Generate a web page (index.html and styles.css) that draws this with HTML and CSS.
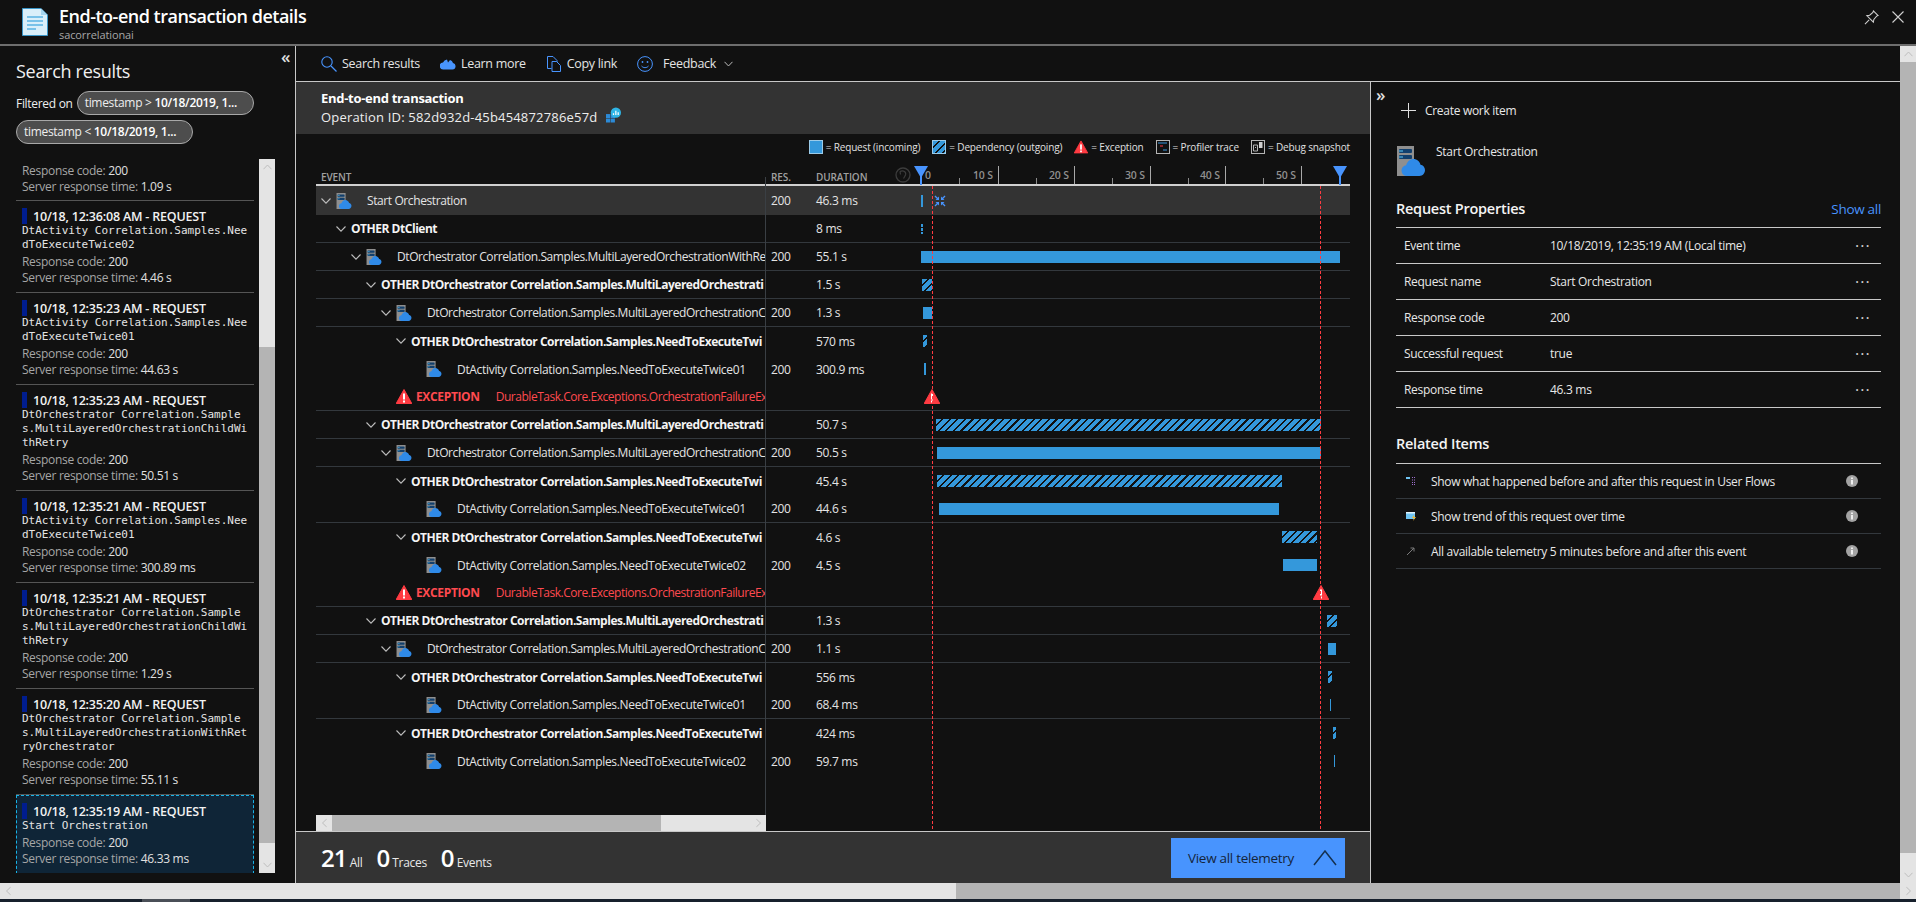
FILE: index.html
```html
<!DOCTYPE html>
<html lang="en">
<head>
<meta charset="utf-8">
<title>End-to-end transaction details</title>
<link rel="stylesheet" href="styles.css">
</head>
<body>
<svg class="defs" width="0" height="0" aria-hidden="true">
  <symbol id="srv" viewBox="0 0 28 30">
    <rect x="0" y="0" width="17" height="30" fill="#8f8f8f"/>
    <rect x="2" y="3" width="13" height="4" rx="1" fill="#12406e"/>
    <rect x="2" y="9" width="13" height="4" rx="1" fill="#12406e"/>
    <rect x="2" y="4.500" width="4" height="1" fill="#5cc8f5"/>
    <rect x="2" y="10.500" width="4" height="1" fill="#5cc8f5"/>
    <path d="M10 30a5.500 5.500 0 0 1-5.500-5.500c0-2.800 2-5 4.700-5.300C10.300 15.500 13 13 16.500 13c3.500 0 6.300 2.500 7 5.800 2.600.4 4.500 2.600 4.500 5.300 0 3.200-2.400 5.900-5.500 5.900z" fill="#2f8ae8"/>
  </symbol>
  <symbol id="warn" viewBox="0 0 16 15">
    <path d="M8 .5 15.800 14.500H.2z" fill="#ff3b42" stroke="#ff3b42" stroke-linejoin="round"/>
    <rect x="7" y="4.500" width="2" height="6" fill="#fff"/>
    <rect x="7" y="11.500" width="2" height="2" fill="#fff"/>
  </symbol>
  <symbol id="chev" viewBox="0 0 10 6">
    <path d="M.5.500 5 5.200 9.500.500" fill="none" stroke="#bdbdbd" stroke-width="1.100"/>
  </symbol>
  <symbol id="info" viewBox="0 0 12 12">
    <circle cx="6" cy="6" r="6" fill="#a3a3a3"/>
    <rect x="5.200" y="5" width="1.600" height="4.500" fill="#fff"/>
    <rect x="5.200" y="2.500" width="1.600" height="1.600" fill="#fff"/>
  </symbol>
</svg>

<div class="page">
  <header class="blade-head">
    <svg class="doc-icon" viewBox="0 0 26 28">
      <path d="M.5.500H19L25.500 7V27.500H.5z" fill="#d9effa" stroke="#3a96c8"/>
      <path d="M19 .5V7h6.500z" fill="#a5d5ee"/>
      <path d="M5 9h16M5 13h16M5 17h16M5 21h9" stroke="#59b4e3" stroke-width="1.600"/>
    </svg>
    <div class="blade-titles">
      <h1 class="blade-title">End-to-end transaction details</h1>
      <div class="blade-sub">sacorrelationai</div>
    </div>
    <div class="blade-actions">
      <svg class="pin" viewBox="0 0 16 16"><path d="M10 1l5 5-1.500.5L10.500 10l-.5 3-7-7 3-.5 3.500-3z M5.500 10.500 1 15" fill="none" stroke="#d0d0d0" stroke-width="1.100"/></svg>
      <svg class="close" viewBox="0 0 12 12"><path d="M.5.500l11 11M11.500.500l-11 11" stroke="#d0d0d0" stroke-width="1.100"/></svg>
    </div>
  </header>

  <div class="blade-body">
    <aside class="left">
      <span class="collapse">«</span>
      <h2 class="left-title">Search results</h2>
      <div class="filters">
        <span class="filter-label">Filtered on</span>
        <span class="pill">timestamp &gt; <b>10/18/2019, 1...</b></span>
        <span class="pill">timestamp &lt; <b>10/18/2019, 1...</b></span>
      </div>
      <div class="results">
        <div class="result-list">
          <div class="item partial">
            <div class="meta"><span>Response code:</span> 200</div>
            <div class="meta"><span>Server response time:</span> 1.09 s</div>
          </div>
          <div class="item">
            <div class="item-title"><i class="mark"></i>10/18, 12:36:08 AM - REQUEST</div>
            <div class="mono">DtActivity Correlation.Samples.NeedToExecuteTwice02</div>
            <div class="meta"><span>Response code:</span> 200</div>
            <div class="meta"><span>Server response time:</span> 4.46 s</div>
          </div>
          <div class="item">
            <div class="item-title"><i class="mark"></i>10/18, 12:35:23 AM - REQUEST</div>
            <div class="mono">DtActivity Correlation.Samples.NeedToExecuteTwice01</div>
            <div class="meta"><span>Response code:</span> 200</div>
            <div class="meta"><span>Server response time:</span> 44.63 s</div>
          </div>
          <div class="item">
            <div class="item-title"><i class="mark"></i>10/18, 12:35:23 AM - REQUEST</div>
            <div class="mono">DtOrchestrator Correlation.Sample<br>s.MultiLayeredOrchestrationChildWithRetry</div>
            <div class="meta"><span>Response code:</span> 200</div>
            <div class="meta"><span>Server response time:</span> 50.51 s</div>
          </div>
          <div class="item">
            <div class="item-title"><i class="mark"></i>10/18, 12:35:21 AM - REQUEST</div>
            <div class="mono">DtActivity Correlation.Samples.NeedToExecuteTwice01</div>
            <div class="meta"><span>Response code:</span> 200</div>
            <div class="meta"><span>Server response time:</span> 300.89 ms</div>
          </div>
          <div class="item">
            <div class="item-title"><i class="mark"></i>10/18, 12:35:21 AM - REQUEST</div>
            <div class="mono">DtOrchestrator Correlation.Sample<br>s.MultiLayeredOrchestrationChildWithRetry</div>
            <div class="meta"><span>Response code:</span> 200</div>
            <div class="meta"><span>Server response time:</span> 1.29 s</div>
          </div>
          <div class="item">
            <div class="item-title"><i class="mark"></i>10/18, 12:35:20 AM - REQUEST</div>
            <div class="mono">DtOrchestrator Correlation.Sample<br>s.MultiLayeredOrchestrationWithRetryOrchestrator</div>
            <div class="meta"><span>Response code:</span> 200</div>
            <div class="meta"><span>Server response time:</span> 55.11 s</div>
          </div>
          <div class="item selected">
            <div class="item-title"><i class="mark"></i>10/18, 12:35:19 AM - REQUEST</div>
            <div class="mono">Start Orchestration</div>
            <div class="meta"><span>Response code:</span> 200</div>
            <div class="meta"><span>Server response time:</span> 46.33 ms</div>
          </div>
        </div>
        <div class="vbar list-bar">
          <div class="arrow"><svg class="a-up" viewBox="0 0 10 6"><use href="#chev"/></svg></div>
          <div class="track-top"></div>
          <div class="thumb"></div>
          <div class="arrow"><svg class="a" viewBox="0 0 10 6"><use href="#chev"/></svg></div>
        </div>
      </div>
    </aside>

    <div class="center">
      <nav class="toolbar">
        <span class="tool"><svg class="ti" viewBox="0 0 16 16"><circle cx="6" cy="6" r="5.200" fill="none" stroke="#4894fe" stroke-width="1.100"/><path d="M10 10l5.500 5.500" stroke="#4894fe" stroke-width="1.200"/></svg>Search results</span>
        <span class="tool"><svg class="ti" viewBox="0 0 16 11"><path d="M3.500 11A3.500 3.500 0 0 1 3 4a4.800 4.800 0 0 1 4-3l1 3 2-2.500A4.500 4.500 0 0 1 13 4.500 3.300 3.300 0 0 1 12.500 11z" fill="#4894fe"/></svg>Learn more</span>
        <span class="tool"><svg class="ti copy" viewBox="0 0 14 16"><path d="M4.500 12.500H.5V.5H6l4 4V6M5 5.500h4.500l4 4v6H5z" fill="none" stroke="#4894fe"/></svg>Copy link</span>
        <span class="tool"><svg class="ti smile" viewBox="0 0 16 16"><circle cx="8" cy="8" r="7.400" fill="none" stroke="#4894fe"/><circle cx="5.500" cy="6" r=".9" fill="#4894fe"/><circle cx="10.500" cy="6" r=".9" fill="#4894fe"/><path d="M4.500 10c2 2.200 5 2.200 7 0" fill="none" stroke="#4894fe"/></svg>Feedback<svg class="tchev" viewBox="0 0 10 6"><use href="#chev"/></svg></span>
      </nav>

      <div class="work">
        <main class="main">
          <div class="band">
            <div class="band-title">End-to-end transaction</div>
            <div class="band-op">Operation ID: 582d932d-45b454872786e57d
              <svg class="ai" viewBox="0 0 16 16"><rect x="0" y="7" width="4.500" height="4.500" fill="#2c8ad6"/><rect x="5" y="7" width="4.500" height="4.500" fill="#2c8ad6"/><rect x="0" y="12" width="4.500" height="4" fill="#2c8ad6"/><rect x="5" y="12" width="4.500" height="4" fill="#2c8ad6"/><circle cx="10.500" cy="5.500" r="5.500" fill="#2fb5e6"/><path d="M8 8V6M10.500 8V3.500M13 8V5" stroke="#fff" stroke-width="1.300"/></svg>
            </div>
          </div>

          <div class="legend">
            <span class="lg"><i class="sq"></i>= Request (incoming)</span>
            <span class="lg"><i class="sq hatched"></i>= Dependency (outgoing)</span>
            <span class="lg"><svg class="lg-warn" viewBox="0 0 16 15"><use href="#warn"/></svg>= Exception</span>
            <span class="lg"><svg class="lg-box" viewBox="0 0 14 14"><rect x=".5" y=".5" width="13" height="13" fill="none" stroke="#b5b5b5"/><path d="M2 3h9" stroke="#3a96dd"/><path d="M4 6h3" stroke="#ff3b42"/><path d="M7 10h4" stroke="#3a96dd"/></svg>= Profiler trace</span>
            <span class="lg"><svg class="lg-box" viewBox="0 0 14 14"><rect x=".5" y=".5" width="13" height="13" fill="none" stroke="#b5b5b5"/><path d="M2.500 5h4v6h-4zM4 7.500h1" fill="none" stroke="#b5b5b5"/><rect x="8" y="2" width="3.500" height="6" fill="#d0d0d0"/></svg>= Debug snapshot</span>
          </div>

          <div class="table">
            <div class="thead">
              <div class="th">EVENT</div>
              <div class="th">RES.</div>
              <div class="th th-dur">DURATION</div>
              <div class="ruler">
                <span class="rl rl-zero">0</span>
                <i class="tk" style="left:38px"></i>
                <i class="tk big" style="left:77px"></i><span class="rl" style="left:77px">10 S</span>
                <i class="tk" style="left:115px"></i>
                <i class="tk big" style="left:153px"></i><span class="rl" style="left:153px">20 S</span>
                <i class="tk" style="left:191px"></i>
                <i class="tk big" style="left:229px"></i><span class="rl" style="left:229px">30 S</span>
                <i class="tk" style="left:267px"></i>
                <i class="tk big" style="left:304px"></i><span class="rl" style="left:304px">40 S</span>
                <i class="tk" style="left:342px"></i>
                <i class="tk big" style="left:380px"></i><span class="rl" style="left:380px">50 S</span>
                <svg class="marker" style="left:-7px" viewBox="0 0 14 19"><path d="M0 0h14L7 12z" fill="#4894fe"/><rect x="6" y="10" width="2" height="9" fill="#4894fe"/></svg>
                <svg class="marker" style="left:412px" viewBox="0 0 14 19"><path d="M0 0h14L7 12z" fill="#4894fe"/><rect x="6" y="10" width="2" height="9" fill="#4894fe"/></svg>
                <svg class="undo" viewBox="0 0 16 16"><circle cx="8" cy="8" r="7" fill="none" stroke="#3c3c3c" stroke-width="1.300"/><path d="M5 4.500c3.500-1.500 6.500.5 5.500 3.500L8.500 11.500M5 4.500l.5 3" fill="none" stroke="#3c3c3c" stroke-width="1.200"/></svg>
              </div>
            </div>

            <div class="rows">
              <div class="row first sel">
                <div class="name l0"><svg class="ch" viewBox="0 0 10 6"><use href="#chev"/></svg><svg class="srv"><use href="#srv"/></svg><span>Start Orchestration</span></div>
                <div class="res">200</div><div class="dur">46.3 ms</div>
                <div class="track"><i class="tick"></i><svg class="shrink" viewBox="0 0 12 12"><g fill="#4894fe"><path id="sh" d="M5 5H1.500L2.800 3.700.5 1.400 1.400.5 3.700 2.800 5 1.500z"/><path d="M7 5h3.500L9.200 3.700 11.500 1.400 10.600.5 8.300 2.800 7 1.500z"/><path d="M5 7H1.500L2.800 8.300.5 10.600 1.400 11.500 3.700 9.200 5 10.500z"/><path d="M7 7h3.500L9.200 8.300 11.500 10.600 10.600 11.500 8.300 9.200 7 10.500z"/></g></svg></div>
              </div>
              <div class="row sep">
                <div class="name l1 strong"><svg class="ch" viewBox="0 0 10 6"><use href="#chev"/></svg><span>OTHER DtClient</span></div>
                <div class="res"></div><div class="dur">8 ms</div>
                <div class="track"><i class="tick dashed"></i></div>
              </div>
              <div class="row sep">
                <div class="name l2"><svg class="ch" viewBox="0 0 10 6"><use href="#chev"/></svg><svg class="srv"><use href="#srv"/></svg><span>DtOrchestrator Correlation.Samples.MultiLayeredOrchestrationWithRe</span></div>
                <div class="res">200</div><div class="dur">55.1 s</div>
                <div class="track"><i class="bar" style="margin-left:0;width:419px"></i></div>
              </div>
              <div class="row sep">
                <div class="name l3 strong"><svg class="ch" viewBox="0 0 10 6"><use href="#chev"/></svg><span>OTHER DtOrchestrator Correlation.Samples.MultiLayeredOrchestrati</span></div>
                <div class="res"></div><div class="dur">1.5 s</div>
                <div class="track"><i class="bar hatched" style="margin-left:1px;width:10px"></i></div>
              </div>
              <div class="row sep">
                <div class="name l4"><svg class="ch" viewBox="0 0 10 6"><use href="#chev"/></svg><svg class="srv"><use href="#srv"/></svg><span>DtOrchestrator Correlation.Samples.MultiLayeredOrchestrationC</span></div>
                <div class="res">200</div><div class="dur">1.3 s</div>
                <div class="track"><i class="bar" style="margin-left:2px;width:9px"></i></div>
              </div>
              <div class="row">
                <div class="name l5 strong"><svg class="ch" viewBox="0 0 10 6"><use href="#chev"/></svg><span>OTHER DtOrchestrator Correlation.Samples.NeedToExecuteTwi</span></div>
                <div class="res"></div><div class="dur">570 ms</div>
                <div class="track"><i class="bar hatched" style="margin-left:2px;width:4px"></i></div>
              </div>
              <div class="row">
                <div class="name l6"><svg class="srv"><use href="#srv"/></svg><span>DtActivity Correlation.Samples.NeedToExecuteTwice01</span></div>
                <div class="res">200</div><div class="dur">300.9 ms</div>
                <div class="track"><i class="bar" style="margin-left:3px;width:2px"></i></div>
              </div>
              <div class="row sep">
                <div class="name l5 exc"><svg class="w"><use href="#warn"/></svg><b>EXCEPTION</b><span>DurableTask.Core.Exceptions.OrchestrationFailureEx</span></div>
                <div class="res"></div><div class="dur"></div>
                <div class="track"><svg class="w" style="margin-left:3px"><use href="#warn"/></svg></div>
              </div>
              <div class="row sep">
                <div class="name l3 strong"><svg class="ch" viewBox="0 0 10 6"><use href="#chev"/></svg><span>OTHER DtOrchestrator Correlation.Samples.MultiLayeredOrchestrati</span></div>
                <div class="res"></div><div class="dur">50.7 s</div>
                <div class="track"><i class="bar hatched" style="margin-left:15px;width:385px"></i></div>
              </div>
              <div class="row sep">
                <div class="name l4"><svg class="ch" viewBox="0 0 10 6"><use href="#chev"/></svg><svg class="srv"><use href="#srv"/></svg><span>DtOrchestrator Correlation.Samples.MultiLayeredOrchestrationC</span></div>
                <div class="res">200</div><div class="dur">50.5 s</div>
                <div class="track"><i class="bar" style="margin-left:16px;width:384px"></i></div>
              </div>
              <div class="row">
                <div class="name l5 strong"><svg class="ch" viewBox="0 0 10 6"><use href="#chev"/></svg><span>OTHER DtOrchestrator Correlation.Samples.NeedToExecuteTwi</span></div>
                <div class="res"></div><div class="dur">45.4 s</div>
                <div class="track"><i class="bar hatched" style="margin-left:16px;width:345px"></i></div>
              </div>
              <div class="row sep">
                <div class="name l6"><svg class="srv"><use href="#srv"/></svg><span>DtActivity Correlation.Samples.NeedToExecuteTwice01</span></div>
                <div class="res">200</div><div class="dur">44.6 s</div>
                <div class="track"><i class="bar" style="margin-left:18px;width:340px"></i></div>
              </div>
              <div class="row">
                <div class="name l5 strong"><svg class="ch" viewBox="0 0 10 6"><use href="#chev"/></svg><span>OTHER DtOrchestrator Correlation.Samples.NeedToExecuteTwi</span></div>
                <div class="res"></div><div class="dur">4.6 s</div>
                <div class="track"><i class="bar hatched" style="margin-left:361px;width:35px"></i></div>
              </div>
              <div class="row">
                <div class="name l6"><svg class="srv"><use href="#srv"/></svg><span>DtActivity Correlation.Samples.NeedToExecuteTwice02</span></div>
                <div class="res">200</div><div class="dur">4.5 s</div>
                <div class="track"><i class="bar" style="margin-left:362px;width:34px"></i></div>
              </div>
              <div class="row sep">
                <div class="name l5 exc"><svg class="w"><use href="#warn"/></svg><b>EXCEPTION</b><span>DurableTask.Core.Exceptions.OrchestrationFailureEx</span></div>
                <div class="res"></div><div class="dur"></div>
                <div class="track"><svg class="w" style="margin-left:392px"><use href="#warn"/></svg></div>
              </div>
              <div class="row sep">
                <div class="name l3 strong"><svg class="ch" viewBox="0 0 10 6"><use href="#chev"/></svg><span>OTHER DtOrchestrator Correlation.Samples.MultiLayeredOrchestrati</span></div>
                <div class="res"></div><div class="dur">1.3 s</div>
                <div class="track"><i class="bar hatched" style="margin-left:406px;width:10px"></i></div>
              </div>
              <div class="row sep">
                <div class="name l4"><svg class="ch" viewBox="0 0 10 6"><use href="#chev"/></svg><svg class="srv"><use href="#srv"/></svg><span>DtOrchestrator Correlation.Samples.MultiLayeredOrchestrationC</span></div>
                <div class="res">200</div><div class="dur">1.1 s</div>
                <div class="track"><i class="bar" style="margin-left:407px;width:8px"></i></div>
              </div>
              <div class="row">
                <div class="name l5 strong"><svg class="ch" viewBox="0 0 10 6"><use href="#chev"/></svg><span>OTHER DtOrchestrator Correlation.Samples.NeedToExecuteTwi</span></div>
                <div class="res"></div><div class="dur">556 ms</div>
                <div class="track"><i class="bar hatched" style="margin-left:407px;width:4px"></i></div>
              </div>
              <div class="row sep">
                <div class="name l6"><svg class="srv"><use href="#srv"/></svg><span>DtActivity Correlation.Samples.NeedToExecuteTwice01</span></div>
                <div class="res">200</div><div class="dur">68.4 ms</div>
                <div class="track"><i class="bar" style="margin-left:409px;width:1px"></i></div>
              </div>
              <div class="row">
                <div class="name l5 strong"><svg class="ch" viewBox="0 0 10 6"><use href="#chev"/></svg><span>OTHER DtOrchestrator Correlation.Samples.NeedToExecuteTwi</span></div>
                <div class="res"></div><div class="dur">424 ms</div>
                <div class="track"><i class="bar hatched" style="margin-left:412px;width:3px"></i></div>
              </div>
              <div class="row">
                <div class="name l6"><svg class="srv"><use href="#srv"/></svg><span>DtActivity Correlation.Samples.NeedToExecuteTwice02</span></div>
                <div class="res">200</div><div class="dur">59.7 ms</div>
                <div class="track"><i class="bar" style="margin-left:413px;width:1px"></i></div>
              </div>
            </div>

            <div class="tbl-scroll">
              <div class="hscroll-row">
                <div class="arrow-h"><svg class="a-left" viewBox="0 0 10 6"><use href="#chev"/></svg></div>
                <div class="h-thumb"></div>
                <div class="h-rest"><svg class="a-right" viewBox="0 0 10 6"><use href="#chev"/></svg></div>
              </div>
            </div>
            <i class="col-line"></i>
            <i class="red-line r1"></i>
            <i class="red-line r2"></i>
          </div>

          <footer class="footer">
            <div class="counts">
              <span class="count"><b>21</b>All</span>
              <span class="count"><b>0</b>Traces</span>
              <span class="count"><b>0</b>Events</span>
            </div>
            <button class="view-all">View all telemetry<svg viewBox="0 0 24 16"><path d="M1 15 12 1l11 14" fill="none" stroke="#14304f" stroke-width="1.500"/></svg></button>
          </footer>
        </main>

        <section class="right">
          <span class="expand">»</span>
          <div class="create"><svg viewBox="0 0 15 15"><path d="M7.500 0v15M0 7.500h15" stroke="#e0e0e0"/></svg>Create work item</div>
          <div class="entity"><svg class="big-srv"><use href="#srv"/></svg><span>Start Orchestration</span></div>
          <div class="sec-head"><h3>Request Properties</h3><a class="show-all">Show all</a></div>
          <div class="prop"><span class="k">Event time</span><span class="v">10/18/2019, 12:35:19 AM (Local time)</span><span class="dots">···</span></div>
          <div class="prop"><span class="k">Request name</span><span class="v">Start Orchestration</span><span class="dots">···</span></div>
          <div class="prop"><span class="k">Response code</span><span class="v">200</span><span class="dots">···</span></div>
          <div class="prop"><span class="k">Successful request</span><span class="v">true</span><span class="dots">···</span></div>
          <div class="prop"><span class="k">Response time</span><span class="v">46.3 ms</span><span class="dots">···</span></div>
          <div class="sec-head related"><h3>Related Items</h3></div>
          <div class="rel">
            <svg class="rel-ic" viewBox="0 0 10 10"><rect x="0" y="1" width="4" height="2" fill="#6fc4f2"/><path d="M6 1h1v1H6zM8 1h1v1H8zM6 3.500h1v1H6zM8 3.500h1v1H8zM6 6h1v1H6zM8 6h1v1H8zM6 8h1v1H6zM8 8h1v1H8z" fill="#a070d0"/></svg>
            <span>Show what happened before and after this request in User Flows</span>
            <svg class="info"><use href="#info"/></svg>
          </div>
          <div class="rel">
            <svg class="rel-ic" viewBox="0 0 10 10"><rect x="0" y="1" width="9" height="7" fill="#6fc4f2"/><rect x="0" y="1" width="9" height="1.500" fill="#dff2fc"/><path d="M8 4 6 7h2l-1 3 3-4H8z" fill="#f5b82e"/></svg>
            <span>Show trend of this request over time</span>
            <svg class="info"><use href="#info"/></svg>
          </div>
          <div class="rel">
            <svg class="rel-ic" viewBox="0 0 10 10"><path d="M1 9 8 2M4.500 2H8V5.500" fill="none" stroke="#7a7a7a"/></svg>
            <span>All available telemetry 5 minutes before and after this event</span>
            <svg class="info"><use href="#info"/></svg>
          </div>
        </section>
      </div>
    </div>

    <div class="vbar page-bar">
      <div class="arrow"><svg class="a-up" viewBox="0 0 10 6"><use href="#chev"/></svg></div>
      <div class="page-thumb"></div>
      <div class="page-rest"><svg class="a" viewBox="0 0 10 6"><use href="#chev"/></svg></div>
    </div>
  </div>

  <div class="page-hbar">
    <div class="arrow-h"><svg class="a-left" viewBox="0 0 10 6"><use href="#chev"/></svg></div>
    <div class="page-h-track"></div>
    <div class="page-h-thumb"></div>
    <div class="arrow-h"><svg class="a-right" viewBox="0 0 10 6"><use href="#chev"/></svg></div>
  </div>
  <div class="taskbar"><i class="task-item"></i></div>
</div>
</body>
</html>
```

FILE: styles.css
```css
* { box-sizing: border-box; }
html, body { margin: 0; height: 100%; overflow: hidden; }
body {
  background: #111;
  color: #e8e8e8;
  font-family: "Open Sans", "Noto Sans", sans-serif;
  font-size: 12px;
  letter-spacing: -0.3px;
}
.defs { position: absolute; }
b { font-weight: 700; }
i { display: block; font-style: normal; }
h1, h2, h3 { margin: 0; }

.page { display: flex; flex-direction: column; width: 1916px; height: 902px; }

/* header */
.blade-head {
  flex: 0 0 46px;
  display: flex;
  align-items: flex-start;
  border-bottom: 2px solid #6e6e6e;
  padding: 8px 0 0 22px;
}
.doc-icon { width: 26px; height: 28px; flex: none; }
.blade-titles { margin-left: 11px; margin-top: -3px; }
.blade-title { font-size: 18px; font-weight: 600; line-height: 23px; color: #fff; letter-spacing: -0.5px; }
.blade-sub { font-size: 11px; line-height: 14px; color: #a8a8a8; letter-spacing: -0.1px; }
.blade-actions { margin-left: auto; display: flex; align-items: center; gap: 13px; padding-right: 12px; height: 14px; margin-top: 2px; }
.pin { width: 15px; height: 15px; }
.close { width: 12px; height: 12px; }

.blade-body { flex: 1; display: flex; min-height: 0; }

/* left */
.left {
  flex: 0 0 296px;
  border-right: 1px solid #c8c8c8;
  position: relative;
  display: flex;
  flex-direction: column;
  padding: 13px 0 10px 16px;
}
.collapse { position: absolute; left: 281px; top: 1px; font-size: 17px; line-height: 20px; font-weight: 600; color: #e0e0e0; }
.left-title { font-size: 18px; font-weight: 400; line-height: 24px; color: #f0f0f0; letter-spacing: -0.3px; }
.filters { display: flex; flex-wrap: wrap; align-items: center; column-gap: 4px; row-gap: 5px; margin-top: 8px; }
.filter-label { color: #eee; font-size: 12px; }
.pill {
  width: 177px;
  height: 24px;
  border: 1px solid #a8a8a8;
  border-radius: 12px;
  background: #4d4d4d;
  padding: 0 7px;
  line-height: 22px;
  white-space: nowrap;
  overflow: hidden;
  color: #eee;
}
.pill b { color: #fff; font-weight: 600; }
.results { flex: 1; min-height: 0; display: flex; margin-top: 15px; }
.result-list { width: 238px; overflow: hidden; }
.item { border-bottom: 1px solid #555; padding: 7px 0 6px 6px; }
.partial { padding-top: 4px; padding-bottom: 5px; }
.item-title { display: flex; align-items: center; height: 16px; font-size: 12.500px; font-weight: 600; color: #f2f2f2; letter-spacing: -0.2px; white-space: nowrap; }
.mark { width: 5px; height: 16px; background: #001d8e; margin-right: 6px; }
.mono {
  font-family: "DejaVu Sans Mono", "Liberation Mono", monospace;
  font-size: 11px;
  line-height: 14px;
  letter-spacing: 0;
  color: #e4e4e4;
  word-break: break-all;
  margin-bottom: 2px;
  padding-right: 6px;
}
.meta { line-height: 16px; color: #e0e0e0; white-space: nowrap; }
.meta span { color: #a6a6a6; }
.item.selected {
  background: #0f2537;
  outline: 1px dashed #19b4e6;
  outline-offset: -1px;
  border-bottom: 0;
  padding-top: 8px;
  padding-bottom: 7px;
}

.vbar { background: #e4e4e4; display: flex; flex-direction: column; }
.list-bar { flex: 0 0 16px; margin-left: 5px; }
.arrow { flex: 0 0 16px; display: flex; align-items: center; justify-content: center; }
.a, .a-up { width: 9px; height: 6px; }
.a-up { transform: rotate(180deg); }
.track-top { flex: 0 0 172px; margin-top: 0; }
.thumb { flex: 1; background: #b4b4b4; margin-bottom: 14px; }

/* center */
.center { flex: 1; display: flex; flex-direction: column; min-width: 0; }
.toolbar {
  flex: 0 0 36px;
  display: flex;
  align-items: center;
  gap: 20px;
  padding-left: 25px;
  border-bottom: 1px solid #c8c8c8;
  font-size: 12.500px;
  color: #e4e4e4;
}
.tool { display: flex; align-items: center; white-space: nowrap; }
.ti { width: 16px; height: 16px; margin-right: 5px; }
.copy { width: 14px; margin-left: 1px; margin-right: 6px; }
.smile { margin-right: 10px; }
.tchev { width: 9px; height: 6px; margin-left: 8px; }
.work { flex: 1; display: flex; min-height: 0; }

/* main */
.main { flex: 0 0 1075px; border-right: 1px solid #c8c8c8; display: flex; flex-direction: column; }
.band { flex: 0 0 52px; background: #333; padding: 7px 0 0 25px; }
.band-title { font-size: 13px; font-weight: 700; line-height: 18px; color: #fff; }
.band-op { display: flex; align-items: center; gap: 9px; font-size: 13px; line-height: 20px; color: #eee; letter-spacing: 0.18px; }
.ai { width: 15px; height: 16px; margin-top: -4px; }

.legend {
  flex: 0 0 26px;
  display: flex;
  justify-content: flex-end;
  align-items: center;
  gap: 12px;
  padding-right: 20px;
  font-size: 10px;
  letter-spacing: -0.15px;
  color: #e0e0e0;
}
.lg { display: flex; align-items: center; gap: 3px; white-space: nowrap; }
.sq { width: 14px; height: 14px; background: #3498db; border: 1px solid #9ccbe8; }
.hatched { background: repeating-linear-gradient(135deg, #3498db 0 3.800px, #111 3.800px 5.400px); }
.sq.hatched { border-color: #9ccbe8; }
.lg-warn { width: 14px; height: 14px; }
.lg-box { width: 14px; height: 14px; }

.table { flex: 1; min-height: 0; position: relative; margin: 0 20px 0 20px; display: flex; flex-direction: column; }
.thead {
  flex: 0 0 26px;
  display: grid;
  grid-template-columns: 449px 51px 105px 429px;
  border-bottom: 2px solid #d0d0d0;
  font-size: 10px;
  font-weight: 600;
  color: #a0a0a0;
  letter-spacing: -0.1px;
}
.th { padding: 10px 0 0 5px; line-height: 14px; }
.th:nth-child(2) { padding-left: 6px; }
.th-dur { padding-left: 0; }
.ruler { position: relative; }
.tk { position: absolute; bottom: 0; width: 1px; height: 6px; background: #8a8a8a; }
.tk.big { height: 18px; background: #a8a8a8; }
.rl { position: absolute; top: 9px; left: 0; transform: translateX(-100%); padding-right: 5px; line-height: 13px; font-size: 10.500px; font-weight: 600; color: #8f8f8f; white-space: nowrap; }
.rl-zero { left: 4px; transform: none; padding: 0; }
.marker { position: absolute; width: 14px; height: 19px; top: 6px; }
.undo { position: absolute; left: -26px; top: 7px; width: 16px; height: 16px; }

.rows { flex: 1; min-height: 0; }
.row {
  display: grid;
  grid-template-columns: 449px 51px 105px 429px;
  height: 28px;
  align-items: center;
  color: #e4e4e4;
}
.row.sep { border-bottom: 1px solid #33383d; }
.row.first { height: 29px; }
.row.sel { background: #333; }
.name { display: flex; align-items: center; overflow: hidden; white-space: nowrap; height: 100%; letter-spacing: -0.4px; }
.l0 { padding-left: 5px; }
.l1 { padding-left: 20px; }
.l2 { padding-left: 35px; }
.l3 { padding-left: 50px; }
.l4 { padding-left: 65px; }
.l5 { padding-left: 80px; }
.l6 { padding-left: 110px; }
.l6 span { letter-spacing: -0.32px; }
.ch { flex: none; width: 10px; height: 6px; margin-right: 5px; }
.srv { flex: none; width: 16px; height: 16px; margin-right: 15px; }
.strong { font-weight: 700; color: #f4f4f4; letter-spacing: -0.47px; }
.exc { color: #ff4a4f; letter-spacing: -0.47px; }
.exc b { font-weight: 700; margin-right: 16px; letter-spacing: -0.35px; }
.w { flex: none; width: 16px; height: 15px; margin-right: 4px; }
.res { padding-left: 6px; }
.track { display: flex; align-items: center; height: 100%; }
.bar { height: 12px; background: #3498db; flex: none; }
.bar.hatched { background: repeating-linear-gradient(135deg, #3498db 0 3.800px, #111 3.800px 5.400px); }
.tick { width: 2px; height: 12px; background: #3498db; flex: none; }
.tick.dashed { height: 10px; background: linear-gradient(#3498db 0 3px, transparent 3px 4px, #3498db 4px 7px, transparent 7px 8px, #3498db 8px); }
.shrink { width: 12px; height: 12px; margin-left: 11px; }

.tbl-scroll { flex: 0 0 16px; }
.hscroll-row { display: flex; width: 450px; height: 16px; background: #e4e4e4; }
.arrow-h { flex: 0 0 16px; display: flex; align-items: center; justify-content: center; background: #e4e4e4; }
.a-left, .a-right { width: 9px; height: 6px; }
.a-left { transform: rotate(90deg); }
.a-right { transform: rotate(-90deg); }
.h-thumb { width: 329px; background: #b4b4b4; }
.h-rest { flex: 1; display: flex; align-items: center; justify-content: flex-end; padding-right: 3px; }

.col-line { position: absolute; left: 449px; top: 17px; bottom: 16px; width: 1px; background: #3a3f44; }
.red-line { position: absolute; top: 26px; bottom: 0; width: 1px; background: repeating-linear-gradient(#ff3b42 0 3px, transparent 3px 5px); }
.r1 { left: 616px; }
.r2 { left: 1004px; }

.footer {
  flex: 0 0 52px;
  background: #333;
  border-top: 1px solid #c8c8c8;
  display: flex;
  align-items: center;
  justify-content: space-between;
  padding: 0 25px;
}
.counts { display: flex; gap: 14px; align-items: baseline; }
.count { display: flex; align-items: baseline; gap: 3px; font-size: 12px; color: #e8e8e8; }
.count b { font-size: 24px; font-weight: 600; color: #fff; line-height: 30px; letter-spacing: -0.9px; }
.view-all {
  width: 174px;
  height: 40px;
  margin-top: 1px;
  border: 0;
  background: #4894fe;
  color: #14243a;
  font: inherit;
  font-size: 13.500px;
  letter-spacing: -0.3px;
  display: flex;
  align-items: center;
  padding: 0 8px 0 17px;
  justify-content: space-between;
}
.view-all svg { width: 24px; height: 16px; }

/* right */
.right { flex: 1; position: relative; padding: 0 19px 0 25px; min-width: 0; }
.expand { position: absolute; left: 5px; top: 3px; font-size: 17px; line-height: 20px; font-weight: 600; color: #e0e0e0; }
.create { display: flex; align-items: center; gap: 9px; height: 20px; margin: 18px 0 0 5px; font-size: 12px; }
.create svg { width: 15px; height: 15px; }
.entity { display: flex; align-items: flex-start; gap: 11px; margin-top: 26px; height: 30px; padding-left: 1px; }
.big-srv { width: 28px; height: 30px; }
.entity span { line-height: 18px; margin-top: -3px; }
.sec-head { display: flex; justify-content: space-between; align-items: center; margin-top: 22px; height: 30px; border-bottom: 1px solid #c8c8c8; padding-bottom: 8px; }
.sec-head h3 { font-size: 14.500px; font-weight: 600; color: #f4f4f4; letter-spacing: -0.25px; }
.show-all { color: #4894fe; font-size: 13.500px; }
.prop { display: flex; align-items: center; height: 36px; border-bottom: 1px solid #c8c8c8; padding-left: 8px; }
.k { width: 146px; }
.v { flex: 1; }
.dots { width: 26px; font-size: 16px; letter-spacing: 1px; color: #cfcfcf; }
.sec-head.related { margin-top: 26px; height: 30px; padding-bottom: 10px; }
.rel { display: flex; align-items: center; height: 35px; border-bottom: 1px solid #33383d; padding-left: 10px; }
.rel-ic { width: 10px; height: 10px; flex: none; margin-right: 15px; }
.rel span { flex: 1; }
.info { width: 12px; height: 12px; margin-right: 23px; }

/* page scrollbars */
.page-bar { flex: 0 0 16px; }
.page-thumb { flex: 0 0 791px; background: #b4b4b4; }
.page-rest { flex: 1; display: flex; align-items: flex-end; justify-content: center; padding-bottom: 5px; }
.page-hbar { flex: 0 0 16px; display: flex; background: #e4e4e4; }
.page-h-track { flex: 0 0 940px; }
.page-h-thumb { flex: 1; background: #b4b4b4; }
.taskbar { flex: 0 0 3px; background: #17202c; padding-left: 142px; }
.task-item { width: 48px; height: 3px; background: #4a4f57; }
```
